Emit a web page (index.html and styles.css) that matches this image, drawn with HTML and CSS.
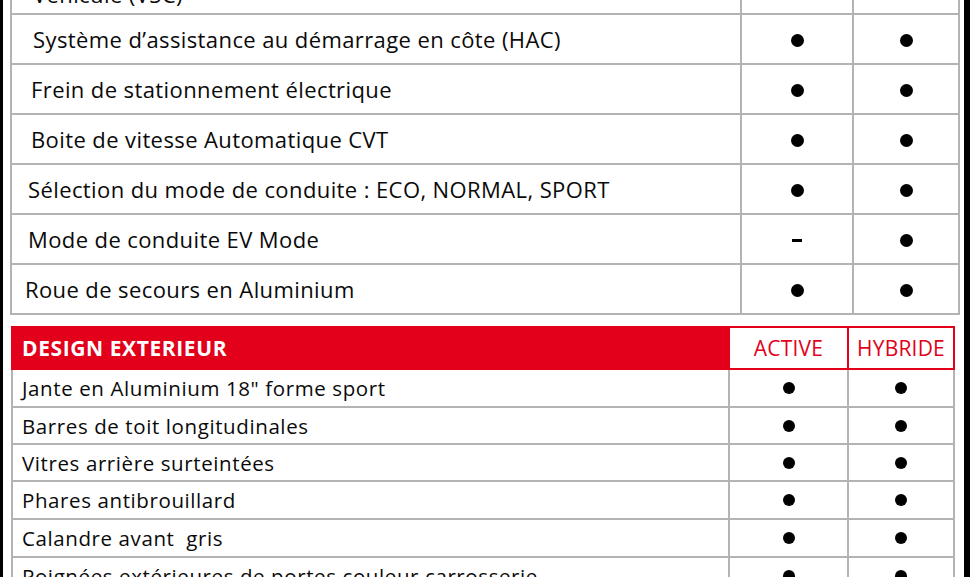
FILE: index.html
```html
<!DOCTYPE html>
<html lang="fr">
<head>
<meta charset="utf-8">
<title>Équipements</title>
<link rel="stylesheet" href="styles.css">
</head>
<body>
<div class="page">
  <div class="spec spec-top">
    <div class="cell label first i0">Véhicule (VSC)</div><div class="cell mark"></div><div class="cell mark"></div>
    <div class="cell label i0">Système d’assistance au démarrage en côte (HAC)</div><div class="cell mark"><span class="dot"></span></div><div class="cell mark"><span class="dot"></span></div>
    <div class="cell label i1">Frein de stationnement électrique</div><div class="cell mark"><span class="dot"></span></div><div class="cell mark"><span class="dot"></span></div>
    <div class="cell label i1">Boite de vitesse Automatique CVT</div><div class="cell mark"><span class="dot"></span></div><div class="cell mark"><span class="dot"></span></div>
    <div class="cell label i2">Sélection du mode de conduite : ECO, NORMAL, SPORT</div><div class="cell mark"><span class="dot"></span></div><div class="cell mark"><span class="dot"></span></div>
    <div class="cell label i2">Mode de conduite EV Mode</div><div class="cell mark"><span class="dash" title="-"></span></div><div class="cell mark"><span class="dot"></span></div>
    <div class="cell label i3">Roue de secours en Aluminium</div><div class="cell mark"><span class="dot"></span></div><div class="cell mark"><span class="dot"></span></div>
  </div>

  <div class="section">
    <div class="section-head">
      <div class="head-title">DESIGN EXTERIEUR</div>
      <div class="head-col">ACTIVE</div>
      <div class="head-col">HYBRIDE</div>
    </div>
    <div class="spec spec-bottom">
      <div class="cell label">Jante en Aluminium 18" forme sport</div><div class="cell mark"><span class="dot sm"></span></div><div class="cell mark"><span class="dot sm"></span></div>
      <div class="cell label">Barres de toit longitudinales</div><div class="cell mark"><span class="dot sm"></span></div><div class="cell mark"><span class="dot sm"></span></div>
      <div class="cell label">Vitres arrière surteintées</div><div class="cell mark"><span class="dot sm"></span></div><div class="cell mark"><span class="dot sm"></span></div>
      <div class="cell label">Phares antibrouillard</div><div class="cell mark"><span class="dot sm"></span></div><div class="cell mark"><span class="dot sm"></span></div>
      <div class="cell label">Calandre avant&nbsp; gris</div><div class="cell mark"><span class="dot sm"></span></div><div class="cell mark"><span class="dot sm"></span></div>
      <div class="cell label">Poignées extérieures de portes couleur carrosserie</div><div class="cell mark"><span class="dot sm"></span></div><div class="cell mark"><span class="dot sm"></span></div>
    </div>
  </div>
</div>
</body>
</html>
```

FILE: styles.css
```css
html, body {
  margin: 0;
  padding: 0;
  background: #000;
}
body {
  width: 970px;
  height: 577px;
  overflow: hidden;
}
.page {
  margin-left: 3px;
  width: 961px;
  height: 577px;
  background: #fff;
  overflow: hidden;
  font-family: "Open Sans", "Noto Sans", sans-serif;
  color: #0a0a0a;
}
.spec {
  display: grid;
  background: #b3b3b3;
  column-gap: 2px;
  row-gap: 2px;
}
.cell {
  background: #fff;
  display: flex;
  align-items: center;
}
.mark {
  justify-content: center;
}
.spec-top {
  margin-left: 7px;
  margin-top: -20px;
  width: 946px;
  padding: 0 2px 2px 2px;
  grid-template-columns: 728px 110px 104px;
  grid-template-rows: 33px repeat(6, 48px);
  font-size: 22px;
  letter-spacing: 0.4px;
}
.spec-top .label {
  white-space: nowrap;
}
.spec-top .mark {
  padding-top: 3px;
}
.spec-top .first {
  align-items: flex-end;
  line-height: 26px;
  padding-bottom: 6px;
}
.i0 { padding-left: 21px; }
.i1 { padding-left: 19px; }
.i2 { padding-left: 16px; }
.i3 { padding-left: 13px; }

.dot {
  display: inline-block;
  width: 13px;
  height: 13px;
  border-radius: 50%;
  background: #000;
}
.dot.sm {
  width: 12px;
  height: 12px;
}
.dash {
  display: inline-block;
  width: 10px;
  height: 3px;
  background: #000;
}

.section {
  margin-top: 11px;
  margin-left: 8px;
  width: 944px;
}
.section-head {
  display: grid;
  grid-template-columns: 715px 117px 104px;
  column-gap: 2px;
  padding: 2px;
  height: 40px;
  background: #e2001a;
}
.head-title {
  background: #e2001a;
  color: #fff;
  font-weight: 700;
  font-size: 21px;
  letter-spacing: 0.6px;
  display: flex;
  align-items: center;
  padding-left: 9px;
}
.head-col {
  background: #fff;
  color: #e2001a;
  font-size: 21px;
  letter-spacing: 0.2px;
  display: flex;
  align-items: center;
  justify-content: center;
}
.spec-bottom {
  padding: 0 2px 2px 2px;
  grid-template-columns: 715px 117px 104px;
  grid-template-rows: 36px 35px 35px 36px 36px 36px;
  font-size: 20.5px;
  letter-spacing: 0.6px;
}
.spec-bottom .label {
  padding-left: 9px;
  white-space: nowrap;
}
```
